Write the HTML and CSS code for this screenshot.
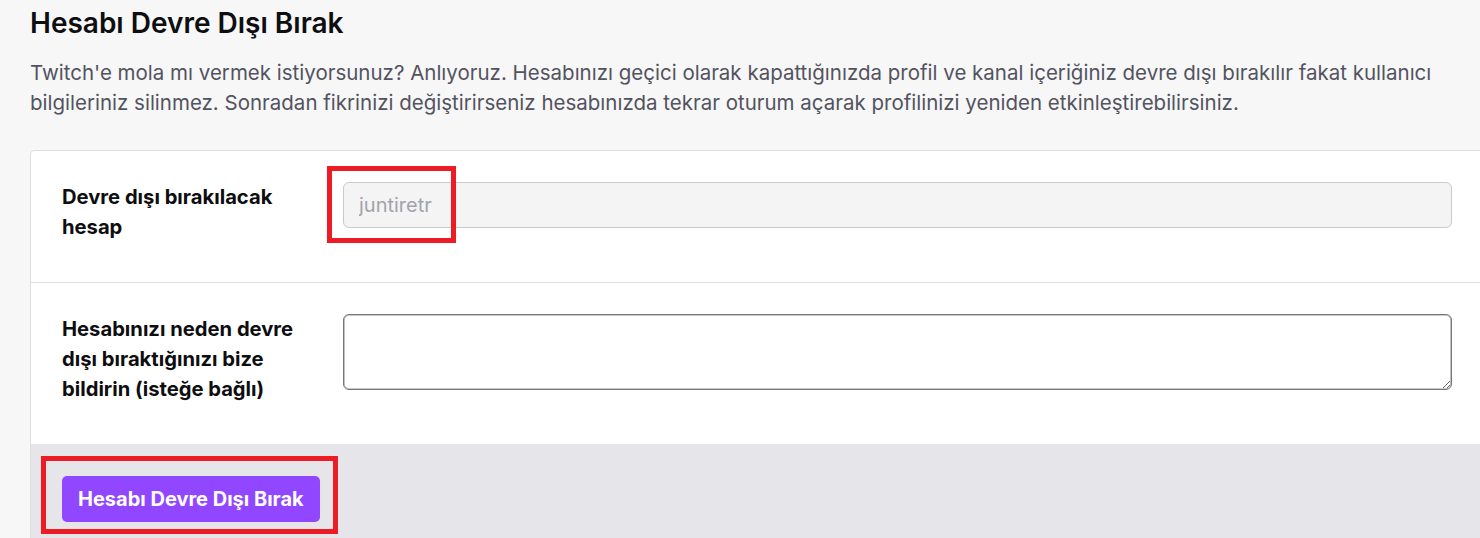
FILE: index.html
```html
<!DOCTYPE html>
<html lang="tr">
<head>
<meta charset="utf-8">
<title>Hesabı Devre Dışı Bırak</title>
<link rel="stylesheet" href="styles.css">
</head>
<body>
<div class="page">
  <h1 class="title">Hesabı Devre Dışı Bırak</h1>
  <p class="intro">Twitch'e mola mı vermek istiyorsunuz? Anlıyoruz. Hesabınızı geçici olarak kapattığınızda profil ve kanal içeriğiniz devre dışı bırakılır fakat kullanıcı bilgileriniz silinmez. Sonradan fikrinizi değiştirirseniz hesabınızda tekrar oturum açarak profilinizi yeniden etkinleştirebilirsiniz.</p>
  <div class="card">
    <div class="row">
      <label class="label" for="acct">Devre dışı bırakılacak hesap</label>
      <div class="field">
        <input id="acct" class="input" type="text" value="juntiretr" disabled>
      </div>
    </div>
    <div class="row row-sep">
      <label class="label" for="reason">Hesabınızı neden devre dışı bıraktığınızı bize bildirin (isteğe bağlı)</label>
      <div class="field">
        <textarea id="reason" class="textarea"></textarea>
      </div>
    </div>
    <div class="footer">
      <button class="btn" type="button">Hesabı Devre Dışı Bırak</button>
    </div>
  </div>
  <div class="mark mark-input"></div>
  <div class="mark mark-btn"></div>
</div>
</body>
</html>
```
FILE: styles.css
```css
html, body {
  margin: 0;
  padding: 0;
}
body {
  background: #f7f7f8;
  font-family: Inter, "Noto Sans", "DejaVu Sans", sans-serif;
  color: #0e0e10;
  overflow: hidden;
  width: 1480px;
  height: 538px;
}
.page {
  position: relative;
  padding: 6px 0 0 30px;
  display: flex;
  flex-direction: column;
  align-items: flex-start;
}
.title {
  margin: 0;
  font-size: 28px;
  line-height: 34px;
  font-weight: 600;
  color: #0e0e10;
}
.intro {
  margin: 18px 0 0 0;
  width: 1440px;
  font-size: 20.5px;
  line-height: 30px;
  color: #53535f;
  font-weight: 400;
}
.card {
  margin-top: 32px;
  box-sizing: border-box;
  width: 1453px;
  flex-shrink: 0;
  background: #ffffff;
  border: 1px solid #dedee3;
  border-radius: 4px;
  overflow: hidden;
}
.row {
  display: grid;
  grid-template-columns: 281px 1fr;
  padding: 31px 30px 40px 31px;
}
.row-sep {
  border-top: 1px solid #dedee3;
}
.label {
  font-size: 20.2px;
  line-height: 30px;
  font-weight: 700;
  color: #0e0e10;
  padding-right: 20px;
}
.field {
  display: flex;
  flex-direction: column;
}
.input {
  box-sizing: border-box;
  height: 46px;
  width: 100%;
  margin: 0;
  padding: 0 15px;
  font-family: inherit;
  font-size: 20px;
  color: #a3a3aa;
  background: #f4f4f5;
  border: 1px solid #c9c9ce;
  border-radius: 6px;
  outline: none;
}
.textarea {
  box-sizing: border-box;
  height: 76px;
  width: 100%;
  margin: 0;
  padding: 8px 15px;
  font-family: inherit;
  font-size: 20px;
  background: #ffffff;
  border: 1px solid #76767c;
  box-shadow: inset 0 0 0 0.6px #9a9aa0;
  border-radius: 6px;
  outline: none;
}
.footer {
  background: #e6e6ea;
  padding: 32px 31px 40px;
}
.btn {
  height: 46px;
  padding: 0 16px;
  border: 0;
  border-radius: 5px;
  background: #9147ff;
  color: #ffffff;
  font-family: inherit;
  font-size: 20px;
  font-weight: 700;
  cursor: pointer;
}
.mark {
  position: absolute;
  box-sizing: border-box;
  border: 5px solid #ed1c24;
}
.mark-input {
  left: 327px;
  top: 166px;
  width: 129px;
  height: 77px;
}
.mark-btn {
  left: 41px;
  top: 456px;
  width: 297px;
  height: 78px;
}
```
